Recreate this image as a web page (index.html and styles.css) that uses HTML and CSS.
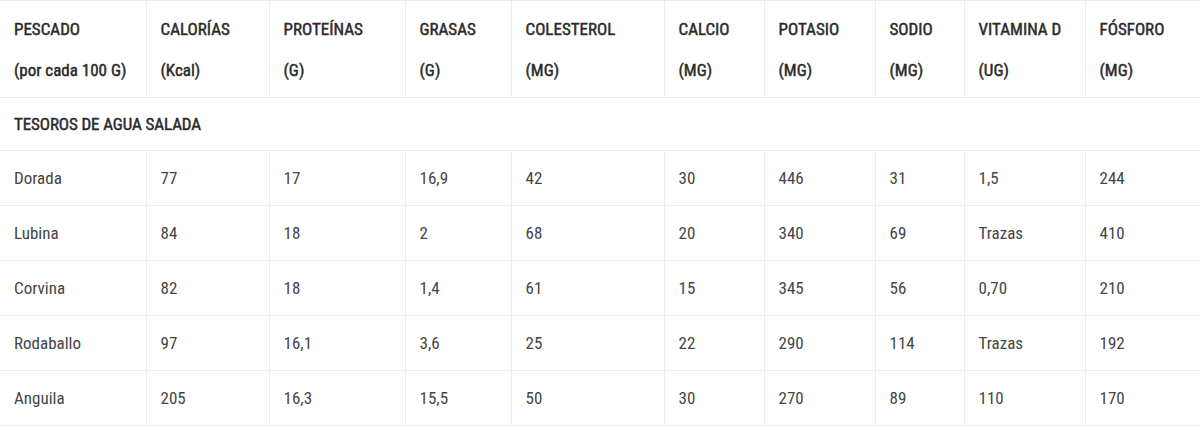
FILE: index.html
```html
<!DOCTYPE html>
<html lang="es">
<head>
<meta charset="utf-8">
<title>Pescado</title>
<link rel="stylesheet" href="styles.css">
</head>
<body>
<table class="nutri">
  <colgroup>
    <col class="c1"><col class="c2"><col class="c3"><col class="c4"><col class="c5">
    <col class="c6"><col class="c7"><col class="c8"><col class="c9"><col class="c10">
  </colgroup>
  <thead>
    <tr>
      <th><span class="l">PESCADO</span><span class="l">(por cada 100 G)</span></th>
      <th><span class="l">CALORÍAS</span><span class="l">(Kcal)</span></th>
      <th><span class="l">PROTEÍNAS</span><span class="l">(G)</span></th>
      <th><span class="l">GRASAS</span><span class="l">(G)</span></th>
      <th><span class="l">COLESTEROL</span><span class="l">(MG)</span></th>
      <th><span class="l">CALCIO</span><span class="l">(MG)</span></th>
      <th><span class="l">POTASIO</span><span class="l">(MG)</span></th>
      <th><span class="l">SODIO</span><span class="l">(MG)</span></th>
      <th><span class="l">VITAMINA D</span><span class="l">(UG)</span></th>
      <th><span class="l">FÓSFORO</span><span class="l">(MG)</span></th>
    </tr>
  </thead>
  <tbody>
    <tr class="section"><td colspan="10">TESOROS DE AGUA SALADA</td></tr>
    <tr><td>Dorada</td><td>77</td><td>17</td><td>16,9</td><td>42</td><td>30</td><td>446</td><td>31</td><td>1,5</td><td>244</td></tr>
    <tr><td>Lubina</td><td>84</td><td>18</td><td>2</td><td>68</td><td>20</td><td>340</td><td>69</td><td>Trazas</td><td>410</td></tr>
    <tr><td>Corvina</td><td>82</td><td>18</td><td>1,4</td><td>61</td><td>15</td><td>345</td><td>56</td><td>0,70</td><td>210</td></tr>
    <tr><td>Rodaballo</td><td>97</td><td>16,1</td><td>3,6</td><td>25</td><td>22</td><td>290</td><td>114</td><td>Trazas</td><td>192</td></tr>
    <tr><td>Anguila</td><td>205</td><td>16,3</td><td>15,5</td><td>50</td><td>30</td><td>270</td><td>89</td><td>110</td><td>170</td></tr>
  </tbody>
</table>
</body>
</html>
```

FILE: styles.css
```css
html, body {
  margin: 0;
  padding: 0;
  background: #ffffff;
}

body {
  font-family: "Roboto Condensed", "Open Sans", "Liberation Sans", sans-serif;
  font-size: 17px;
  color: #454545;
}

.nutri {
  width: 1200px;
  border-collapse: collapse;
  table-layout: fixed;
}

.c1 { width: 146px; }
.c2 { width: 123px; }
.c3 { width: 136px; }
.c4 { width: 106px; }
.c5 { width: 153px; }
.c6 { width: 100px; }
.c7 { width: 111px; }
.c8 { width: 89px; }
.c9 { width: 121px; }
.c10 { width: 115px; }

.nutri th,
.nutri td {
  border: 1px solid #ededed;
  padding: 0 8px 0 14px;
  text-align: left;
  vertical-align: middle;
  white-space: nowrap;
}

.nutri tr > :first-child { border-left: none; }
.nutri tr > :last-child { border-right: none; }

.nutri th {
  height: 95px;
  padding-top: 8px;
  padding-bottom: 6px;
  box-sizing: border-box;
  color: #2a2a2a;
  font-weight: 400;
  -webkit-text-stroke: 0.45px #2a2a2a;
  vertical-align: top;
}

.nutri th .l {
  display: block;
  line-height: 41px;
}

.nutri td {
  height: 55px;
  box-sizing: border-box;
}

.section td {
  color: #2a2a2a;
  -webkit-text-stroke: 0.45px #2a2a2a;
  letter-spacing: -0.1px;
  height: 53px;
}
```
